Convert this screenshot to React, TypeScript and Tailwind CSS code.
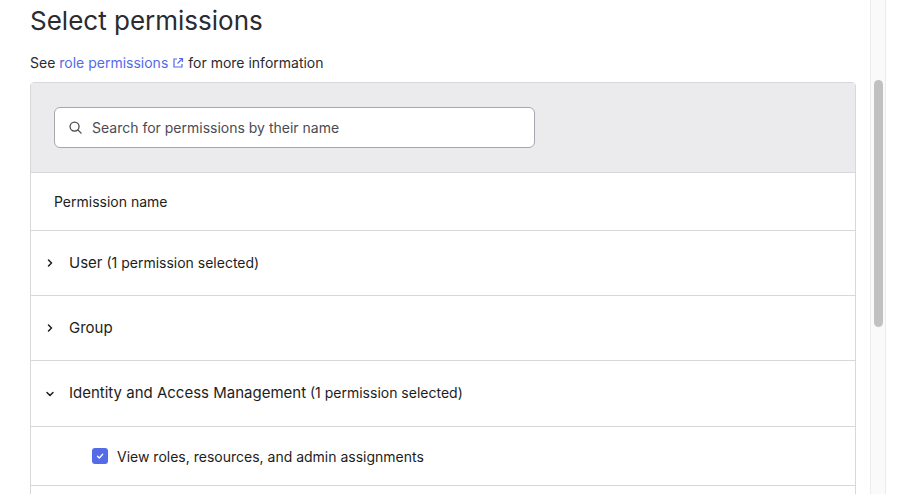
import React from "react";

const Chevron = ({ down }: { down?: boolean }) => (
  <svg width="12" height="12" viewBox="0 0 12 12" fill="none" stroke="#1d1d21" strokeWidth="1.5" strokeLinecap="round" strokeLinejoin="round">
    {down ? <path d="M3 4.5l3 3 3-3" /> : <path d="M4.5 3l3 3-3 3" />}
  </svg>
);

export default function App() {
  return (
    <div className="flex h-[494px] w-[909px] overflow-hidden bg-white text-[#1d1d21]" style={{ fontFamily: "Inter, 'Noto Sans', sans-serif" }}>
      <div className="w-[870px] shrink-0 pl-[30px] pr-[14px]">
        <h1 className="mt-[3px] text-[26px] leading-[36px] text-[#2b2b30]">Select permissions</h1>
        <p className="mt-[14px] text-[14px] leading-[20px] text-[#2b2b30]">
          See <span className="text-[#546be7]">role permissions</span>
          <svg className="mx-[4px] inline-block align-[-1px]" width="12" height="12" viewBox="0 0 12 12" fill="none" stroke="#546be7" strokeWidth="1.2">
            <path d="M5 2H2v8h8V7" />
            <path d="M7 1.5h3.5V5M10.5 1.5L5.5 6.5" />
          </svg>
          for more information
        </p>
        <div className="mt-[9px] rounded-t-[4px] border border-[#d7d7dc]">
          <div className="flex h-[89px] items-start bg-[#ebebed] pl-[23px] pt-[24px]">
            <div className="flex h-[41px] w-[481px] items-center gap-[9px] rounded-[6px] border border-[#a7a7ae] bg-white pl-[13px]">
              <svg width="15" height="15" viewBox="0 0 16 16" fill="none" stroke="#4b4b52" strokeWidth="1.4" strokeLinecap="round">
                <circle cx="7" cy="7" r="4.8" />
                <path d="M10.5 10.5L14 14" />
              </svg>
              <span className="text-[14px] text-[#4b4b52]">Search for permissions by their name</span>
            </div>
          </div>
          <div className="flex h-[58px] items-center border-t border-[#d7d7dc] pl-[23px] text-[14px]">Permission name</div>
          {[
            { n: "User", s: true },
            { n: "Group", s: false },
          ].map((r) => (
            <div key={r.n} className="flex h-[65px] items-center gap-[13px] border-t border-[#d7d7dc] pl-[13px] text-[15px]">
              <Chevron />
              <span>
                {r.n}
                {r.s && <span className="text-[14px]"> (1 permission selected)</span>}
              </span>
            </div>
          ))}
          <div className="flex h-[66px] items-center gap-[13px] border-t border-[#d7d7dc] pl-[13px] text-[15px]">
            <Chevron down />
            <span>
              Identity and Access Management<span className="text-[14px]"> (1 permission selected)</span>
            </span>
          </div>
          <div className="flex h-[60px] items-center gap-[9px] border-y border-[#d7d7dc] pl-[61px] text-[14px]">
            <span className="flex h-[16px] w-[16px] items-center justify-center rounded-[3px] bg-[#546be7]">
              <svg width="10" height="10" viewBox="0 0 10 10" fill="none" stroke="white" strokeWidth="1.3" strokeLinecap="round" strokeLinejoin="round">
                <path d="M2.5 5.2l1.8 1.8 3.4-3.8" />
              </svg>
            </span>
            View roles, resources, and admin assignments
          </div>
          <div className="h-[20px]" />
        </div>
      </div>
      <div className="relative h-full w-[16px] border-x border-[#ececec] bg-[#fafafa]">
        <div className="mx-auto mt-[80px] h-[247px] w-[9px] rounded-full bg-[#c1c1c1]" />
      </div>
      <div className="flex-1 bg-white" />
    </div>
  );
}
